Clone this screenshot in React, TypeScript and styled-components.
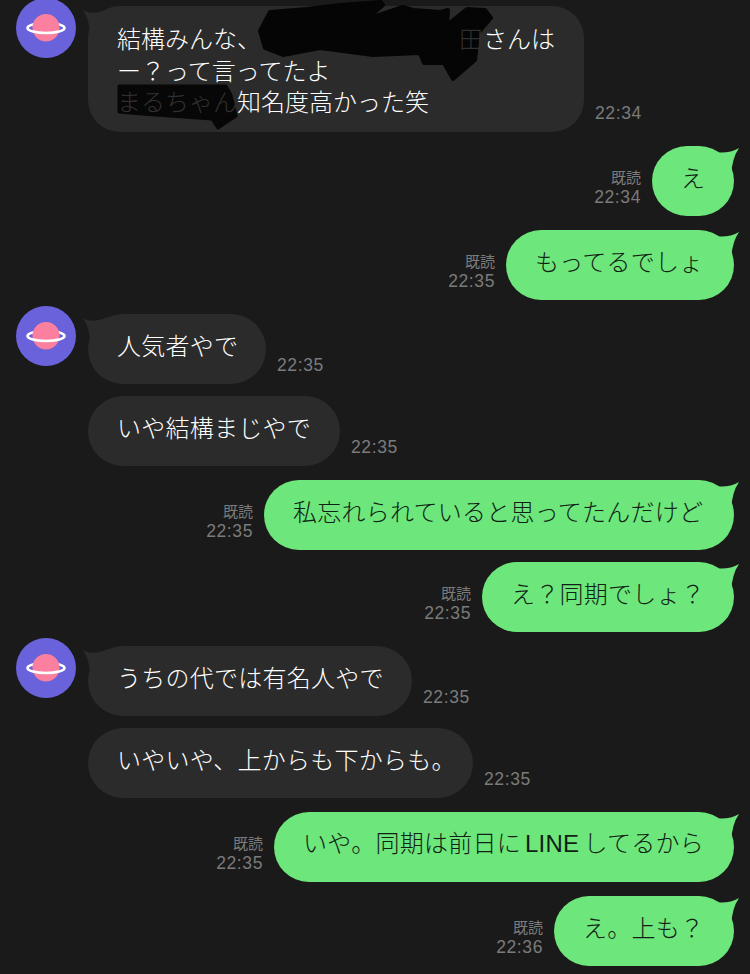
import React from 'react';
import styled, { createGlobalStyle } from 'styled-components';

const GlobalStyle = createGlobalStyle`
	html, body {
		margin: 0;
		padding: 0;
		background: #1a1a1a;
	}
`;

const Latin = styled.span`
	font-family: 'Liberation Sans', sans-serif;
	margin: 0 4px;
`;

type Msg = {
	side: 'in' | 'out';
	text: React.ReactNode;
	time: string;
	width: number;
	read?: boolean;
	avatar?: boolean;
	gap: number;
};

const messages: Msg[] = [
	{ side: 'out', text: 'え', time: '22:34', width: 82, read: true, gap: 14 },
	{ side: 'out', text: 'もってるでしょ', time: '22:35', width: 228, read: true, gap: 14 },
	{ side: 'in', text: '人気者やで', time: '22:35', width: 178, avatar: true, gap: 14 },
	{ side: 'in', text: 'いや結構まじやで', time: '22:35', width: 252, gap: 12 },
	{ side: 'out', text: '私忘れられていると思ってたんだけど', time: '22:35', width: 470, read: true, gap: 14 },
	{ side: 'out', text: 'え？同期でしょ？', time: '22:35', width: 252, read: true, gap: 12 },
	{ side: 'in', text: 'うちの代では有名人やで', time: '22:35', width: 324, avatar: true, gap: 14 },
	{ side: 'in', text: 'いやいや、上からも下からも。', time: '22:35', width: 385, gap: 12 },
	{
		side: 'out',
		text: (
			<>
				いや。同期は前日に<Latin>LINE</Latin>してるから
			</>
		),
		time: '22:35',
		width: 460,
		read: true,
		gap: 14
	},
	{ side: 'out', text: 'え。上も？', time: '22:36', width: 180, read: true, gap: 14 }
];

const Avatar: React.FC = () => (
	<AvatarBox>
		<svg width="60" height="60" viewBox="0 0 60 60">
			<circle cx="30" cy="30" r="30" fill="#6a62db" />
			<circle cx="30" cy="30" r="13.5" fill="#fb7f9e" />
			<ellipse cx="30" cy="30" rx="18.5" ry="5" fill="none" stroke="#fff" strokeWidth="2.6" />
			<path d="M16.5 29.5a13.5 13.5 0 0 1 27 0q-13.500-1.500-27 0z" fill="#fb7f9e" />
		</svg>
	</AvatarBox>
);

const TailIn: React.FC = () => (
	<TailLeft width="30" height="30" viewBox="0 0 30 30">
		<path d="M3 4Q12 10 28 3V30H10C10 20 8 12 3 4z" fill="#2b2b2b" />
	</TailLeft>
);

const TailOut: React.FC = () => (
	<TailRight width="30" height="30" viewBox="0 0 30 30">
		<path d="M30 2Q20 8 5 6V30H22Q23 12 30 2z" fill="#6de67c" />
	</TailRight>
);

const Row: React.FC<{ msg: Msg }> = ({ msg }) => (
	<MessageRow $side={msg.side} $gap={msg.gap}>
		{msg.avatar && <Avatar />}
		{msg.side === 'out' && (
			<Meta $side="out">
				{msg.read && <ReadMark>既読</ReadMark>}
				<Time>{msg.time}</Time>
			</Meta>
		)}
		<Bubble $side={msg.side} $width={msg.width}>
			{msg.side === 'in' && msg.avatar && <TailIn />}
			{msg.side === 'out' && <TailOut />}
			<BubbleText>{msg.text}</BubbleText>
		</Bubble>
		{msg.side === 'in' && (
			<Meta $side="in">
				<Time>{msg.time}</Time>
			</Meta>
		)}
	</MessageRow>
);

export default function App() {
	return (
		<>
			<GlobalStyle />
			<Page>
				<MessageRow $side="in" $gap={0}>
					<Avatar />
					<LongBubble>
						<TailIn />
						<BubbleText>
							結構みんな、
							<Hidden>
								<Faint>田</Faint>
							</Hidden>
							さんは
							<br />
							ー？って言ってたよ
							<br />
							<Faint>まるちゃん</Faint>知名度高かった笑
						</BubbleText>
						<Scribble width="496" height="126" viewBox="0 0 496 126">
							<path
								d="M172 25L182 6L219 3L252 -1L293 -4L295 -1L279 13L315 1L325 4L352 6L360 4L359 19L379 3L397 4L403 12L390 27L387 54L365 73L356 57L336 57L332 47L285 49L232 42L195 49L177 42z"
								fill="#050505"
								stroke="#050505"
								strokeWidth="4"
								strokeLinejoin="round"
							/>
							<path
								d="M31 80L138 80L143 89L148 110L130 122L124 113L54 108L31 106z"
								fill="#070707"
								stroke="#070707"
								strokeWidth="3"
								strokeLinejoin="round"
							/>
						</Scribble>
					</LongBubble>
					<Meta $side="in">
						<Time>22:34</Time>
					</Meta>
				</MessageRow>
				{messages.map((m, i) => (
					<Row key={i} msg={m} />
				))}
			</Page>
		</>
	);
}

const Page = styled.div`
	width: 750px;
	height: 974px;
	box-sizing: border-box;
	padding: 6px 16px 0;
	overflow: hidden;
	background: #1a1a1a;
	font-family: 'Noto Sans CJK JP', 'Liberation Sans', sans-serif;
`;

const MessageRow = styled.div<{ $side: 'in' | 'out'; $gap: number }>`
	display: flex;
	align-items: flex-end;
	justify-content: ${({ $side }) => ($side === 'out' ? 'flex-end' : 'flex-start')};
	margin-top: ${({ $gap }) => $gap}px;
	padding-left: ${({ $side }) => ($side === 'in' ? '72px' : '0')};
	position: relative;
`;

const AvatarBox = styled.div`
	position: absolute;
	left: 0;
	top: -8px;
	width: 60px;
	height: 60px;
`;

const Bubble = styled.div<{ $side: 'in' | 'out'; $width: number }>`
	position: relative;
	box-sizing: border-box;
	flex: none;
	width: ${({ $width }) => $width}px;
	height: 70px;
	display: flex;
	align-items: center;
	padding: 0 0 8px 29px;
	border-radius: 35px;
	background: ${({ $side }) => ($side === 'in' ? '#2b2b2b' : '#6de67c')};
	color: ${({ $side }) => ($side === 'in' ? '#ffffff' : '#111f14')};
	font-size: 24px;
	font-weight: 300;
	letter-spacing: 0.25px;
	line-height: 31.5px;
	white-space: nowrap;
`;

const LongBubble = styled.div`
	position: relative;
	box-sizing: border-box;
	flex: none;
	width: 496px;
	height: 126px;
	padding: 16px 0 0 29px;
	border-radius: 32px;
	background: #2b2b2b;
	color: #ffffff;
	font-size: 24px;
	font-weight: 300;
	line-height: 31.5px;
	white-space: nowrap;
`;

const BubbleText = styled.div`
	position: relative;
	z-index: 2;
`;

const Hidden = styled.span`
	display: inline-block;
	width: 222px;
	text-align: right;
`;

const Faint = styled.span`
	color: #303030;
`;

const Scribble = styled.svg`
	position: absolute;
	left: 0;
	top: 0;
	overflow: visible;
	z-index: 1;
`;

const TailLeft = styled.svg`
	position: absolute;
	left: -8px;
	top: 0;
`;

const TailRight = styled.svg`
	position: absolute;
	right: -5px;
	top: 0;
`;

const Meta = styled.div<{ $side: 'in' | 'out' }>`
	display: flex;
	flex-direction: column;
	align-items: flex-end;
	margin: ${({ $side }) => ($side === 'out' ? '0 11px 9px 0' : '0 0 9px 11px')};
	color: #7b7b7b;
`;

const ReadMark = styled.span`
	font-size: 15px;
	line-height: 20px;
`;

const Time = styled.span`
	font-family: 'Liberation Sans', sans-serif;
	font-size: 17.5px;
	letter-spacing: 0.6px;
	line-height: 20px;
`;
